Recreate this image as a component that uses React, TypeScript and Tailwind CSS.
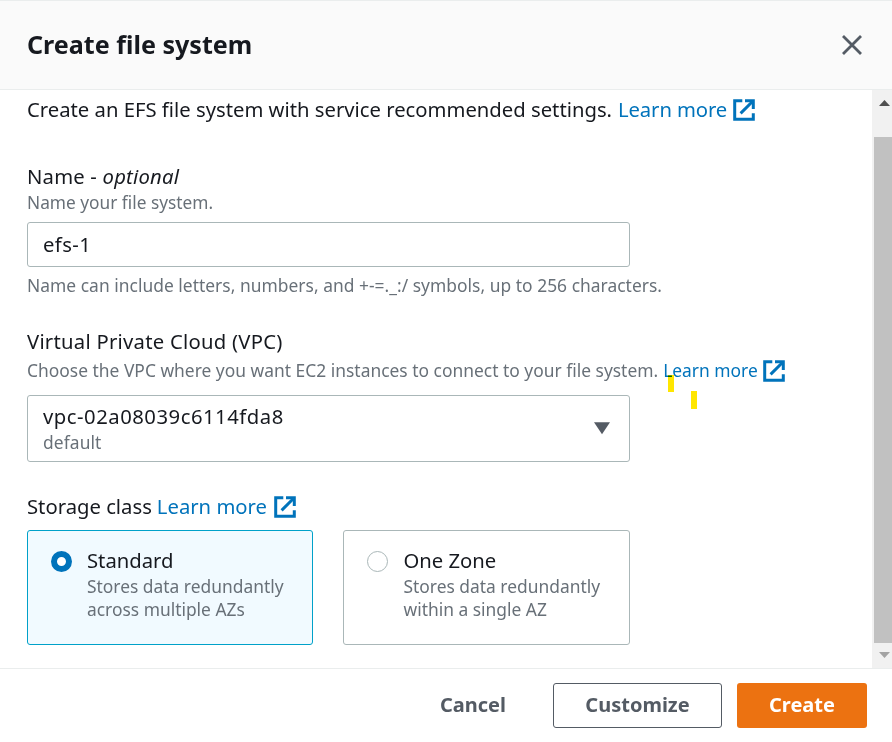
import React from 'react';

function ExternalIcon({ className = '' }: { className?: string }) {
  return (
    <svg className={`h-[22px] w-[22px] shrink-0 ${className}`} viewBox="0 0 22 22" fill="none" stroke="#0073bb" strokeWidth="3">
      <path d="M9.3 1.7H1.7V20.3H20.3V14.2" />
      <path d="M12 1.7H20.3V10" />
      <path d="M20 2L7.6 14.4" />
    </svg>
  );
}

function LearnMore({ className, iconClass }: { className: string; iconClass: string }) {
  return (
    <a className="flex items-center text-[#0073bb]">
      <span className={className}>Learn more</span>
      <ExternalIcon className={iconClass} />
    </a>
  );
}

function StorageCard({ title, lines, selected }: { title: string; lines: string[]; selected?: boolean }) {
  return (
    <div
      className={`flex h-[115px] rounded-[3px] border pt-[15px] pl-[23px] ${
        selected ? 'w-[286px] border-[#00a1c9] bg-[#f1faff]' : 'w-[287px] border-[#aab7b8] bg-white'
      }`}
    >
      <span
        className={`mt-[5px] h-[21px] w-[21px] shrink-0 rounded-full bg-white ${
          selected ? 'border-[6px] border-[#0073bb]' : 'border-[1.5px] border-[#aab7b8]'
        }`}
      />
      <div className={selected ? 'ml-[15px]' : 'ml-[15.5px]'}>
        <div className="pb-px text-[20.25px] leading-[28px]">{title}</div>
        {lines.map((line) => (
          <div key={line} className="text-[17.4px] leading-[23px] text-[#687078]">
            {line}
          </div>
        ))}
      </div>
    </div>
  );
}

export default function App() {
  return (
    <div className="relative flex h-[742px] w-[892px] flex-col overflow-hidden bg-white font-['Noto_Sans',sans-serif] whitespace-nowrap text-[#16191f]">
      <header className="flex h-[90px] shrink-0 items-center justify-between border-y border-[#eaeded] bg-[#fafafa] pr-[30px] pl-[27px]">
        <h1 className="pb-[2px] text-[25.1px] leading-[36px] font-bold">Create file system</h1>
        <svg className="h-5 w-5" viewBox="0 0 20 20" fill="none" stroke="#545b64" strokeWidth="2.8" strokeLinecap="butt">
          <path d="M1 1L19 19M19 1L1 19" />
        </svg>
      </header>

      <div className="flex h-[578px] shrink-0">
        <main className="w-[872px] pt-[5px] pl-[27px]">
          <div className="flex h-[30px] items-center text-[20.25px] leading-[28px]">
            <span className="mr-[6px] pb-[2px]">Create an EFS file system with service recommended settings.</span>
            <LearnMore className="pb-[2px] tracking-[-0.1px]" iconClass="ml-[6px]" />
          </div>

          <div className="mt-[37px] pb-[2px] text-[20.25px] leading-[28px] tracking-[0.2px]">
            Name - <em>optional</em>
          </div>
          <div className="-mt-px text-[17.3px] leading-[23px] text-[#687078]">Name your file system.</div>
          <div className="mt-[8px] flex h-[45px] w-[603px] items-center rounded-[3px] border border-[#aab7b8] pl-[15px] text-[20.25px] tracking-[0.4px]">
            efs-1
          </div>
          <div className="mt-[7px] text-[17.4px] leading-[23px] tracking-[0.03px] text-[#687078]">
            Name can include letters, numbers, and +-=._:/ symbols, up to 256 characters.
          </div>

          <div className="mt-[30px] pb-[2px] text-[20.25px] leading-[28px] tracking-[0.25px]">Virtual Private Cloud (VPC)</div>
          <div className="mt-[2px] flex h-[23px] items-center text-[17.4px] leading-[23px] text-[#687078]">
            <span className="mr-[5px] tracking-[0.01px]">Choose the VPC where you want EC2 instances to connect to your file system.</span>
            <LearnMore className="" iconClass="ml-[5px]" />
          </div>
          <div className="mt-[13px] flex h-[67px] w-[603px] items-center justify-between rounded-[3px] border border-[#aab7b8] pr-[19px] pl-[15px]">
            <div>
              <div className="pb-[2px] text-[20.25px] leading-[26px] tracking-[0.52px]">vpc-02a08039c6114fda8</div>
              <div className="text-[17.4px] leading-[23px] tracking-[0.1px] text-[#687078]">default</div>
            </div>
            <svg className="h-[13px] w-[17px]" viewBox="0 0 17 13" fill="#545b64">
              <path d="M1 0.2H17L9 12.2Z" />
            </svg>
          </div>

          <div className="mt-[30px] flex h-[30px] items-center text-[20.25px] leading-[28px]">
            <span className="mr-[5px] pb-[2px]">Storage class</span>
            <LearnMore className="pb-[2px]" iconClass="ml-[7px]" />
          </div>
          <div className="mt-[8px] flex gap-[30px]">
            <StorageCard selected title="Standard" lines={['Stores data redundantly', 'across multiple AZs']} />
            <StorageCard title="One Zone" lines={['Stores data redundantly', 'within a single AZ']} />
          </div>
        </main>

        <div className="flex w-[20px] flex-col bg-[#f1f1f1] pl-[2px]">
          <div className="h-[47px] pt-[10px] pl-[5px]">
            <svg className="h-[6px] w-[11px]" viewBox="0 0 11 6" fill="#505050">
              <path d="M0 6L5.5 0L11 6Z" />
            </svg>
          </div>
          <div className="h-[506px] bg-[#c1c1c1]" />
          <div className="pt-[9px] pl-[5px]">
            <svg className="h-[6px] w-[11px]" viewBox="0 0 11 6" fill="#a3a3a3">
              <path d="M0 0L5.5 6L11 0Z" />
            </svg>
          </div>
        </div>
      </div>

      <footer className="flex grow items-start justify-end border-t border-[#eaeded] pt-[14px] pr-[25px] text-[20px] font-bold text-[#545b64]">
        <button className="mr-[47px] h-[45px] pb-[2px]">Cancel</button>
        <button className="mr-[15px] h-[45px] w-[169px] rounded-[3px] border border-[#545b64] pb-[2px]">Customize</button>
        <button className="h-[45px] w-[130px] rounded-[3px] bg-[#ec7211] pb-[2px] text-white">Create</button>
      </footer>

      <span className="absolute top-[375px] left-[668px] h-[17px] w-[6px] bg-[#ffe600] mix-blend-multiply" />
      <span className="absolute top-[391px] left-[691px] h-[18px] w-[6px] bg-[#ffe600] mix-blend-multiply" />
    </div>
  );
}
